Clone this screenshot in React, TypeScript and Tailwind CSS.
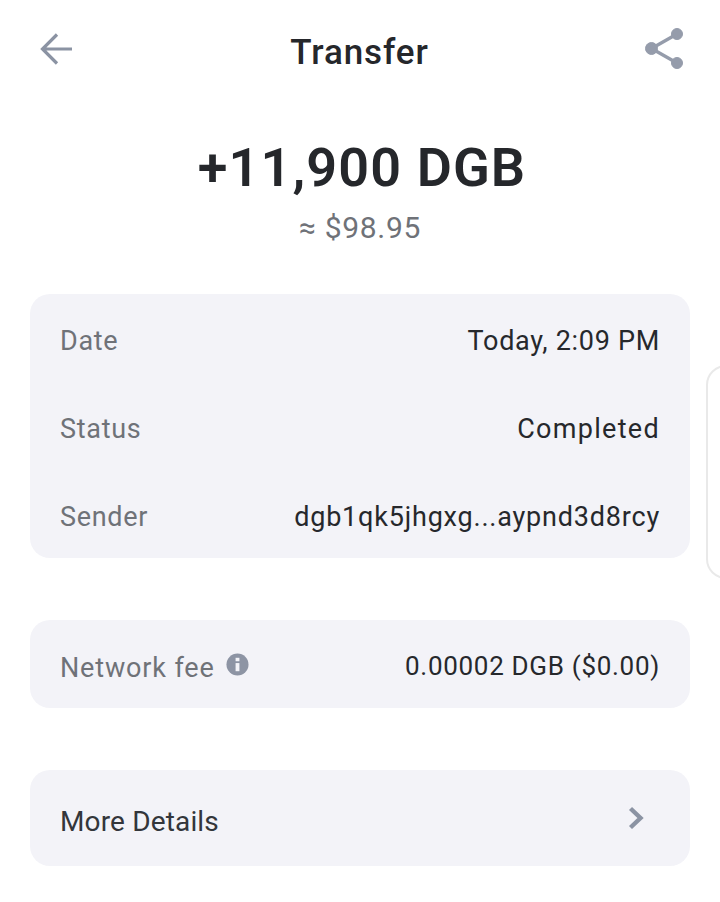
const font = "font-['Roboto','Liberation_Sans',sans-serif]";

function Row({ label, value, spacing }: { label: string; value: string; spacing: string }) {
  return (
    <div className="flex flex-row items-center justify-between h-[88px]">
      <span className="text-[27px] tracking-[0.7px] text-[#6f7278]">{label}</span>
      <span className={`text-[27px] font-[450] text-[#26282c] ${spacing}`}>{value}</span>
    </div>
  );
}

export default function App() {
  return (
    <div className={`relative w-[720px] h-[902px] overflow-hidden bg-white ${font}`}>
      <div className="flex flex-row items-center justify-between h-[104px] pl-[40px] pr-[37px]">
        <svg width="32" height="32" viewBox="0 0 32 32" fill="none" stroke="#8b93a3" strokeWidth="3.2" className="mb-[7px]">
          <path d="M32 16H3M17 1.5L2.5 16L17 30.5" />
        </svg>
        <span className="text-[35px] font-medium tracking-[0.9px] text-[#25272b] mt-[2px] ml-[2px]">Transfer</span>
        <svg width="38" height="41" viewBox="0 0 38 41" fill="#959cab" stroke="#959cab" className="mb-[7px]">
          <circle cx="32" cy="6" r="5.5" />
          <circle cx="32" cy="35" r="5.5" />
          <circle cx="6.5" cy="20.5" r="6" />
          <path d="M32 6L6.5 20.5L32 35" fill="none" strokeWidth="3.4" />
        </svg>
      </div>

      <div className="flex flex-col items-center mt-[30px]">
        <span className="text-[54px] leading-[68px] font-semibold tracking-[1.1px] text-[#25272b] ml-[4px]">+11,900 DGB</span>
        <span className="text-[30px] leading-[52px] tracking-[0.7px] text-[#6f7278]">≈ $98.95</span>
      </div>

      <div className="flex flex-col gap-[62px] mt-[40px] mx-[30px]">
        <div className="h-[264px] rounded-[20px] bg-[#f3f3f8] px-[30px] pt-[3px]">
          <Row label="Date" value="Today, 2:09 PM" spacing="tracking-[0.7px]" />
          <Row label="Status" value="Completed" spacing="tracking-[1.3px]" />
          <Row label="Sender" value="dgb1qk5jhgxg...aypnd3d8rcy" spacing="tracking-[0.8px]" />
        </div>

        <div className="flex flex-row items-center justify-between h-[88px] rounded-[20px] bg-[#f3f3f8] px-[30px] pt-[8px]">
          <div className="flex flex-row items-center gap-[11px]">
            <span className="text-[27px] tracking-[0.85px] text-[#6f7278]">Network fee</span>
            <svg width="23" height="23" viewBox="0 0 24 24" className="mb-[8px]">
              <circle cx="12" cy="12" r="11.5" fill="#8d94a4" />
              <rect x="10" y="10.5" width="4" height="8.5" fill="#f3f3f8" />
              <rect x="10" y="5" width="4" height="3.6" fill="#f3f3f8" />
            </svg>
          </div>
          <span className="text-[26px] font-[450] tracking-[0.7px] text-[#26282c] mb-[3px]">0.00002 DGB ($0.00)</span>
        </div>

        <div className="flex flex-row items-center justify-between h-[96px] rounded-[20px] bg-[#f3f3f8] pl-[30px] pr-[46px] pt-[8px]">
          <span className="text-[28px] tracking-[0.15px] text-[#33363b]">More Details</span>
          <svg width="16" height="24" viewBox="0 0 16 24" fill="none" stroke="#8b93a3" strokeWidth="4.4" className="mb-[8px]">
            <path d="M2.5 2.5L12.5 12L2.5 21.5" />
          </svg>
        </div>
      </div>

      {/* edge of the floating panel */}
      <div className="absolute left-[706px] top-[365px] w-[40px] h-[214px] rounded-[22px] border-2 border-[#e9e9e9] bg-white" />
    </div>
  );
}
